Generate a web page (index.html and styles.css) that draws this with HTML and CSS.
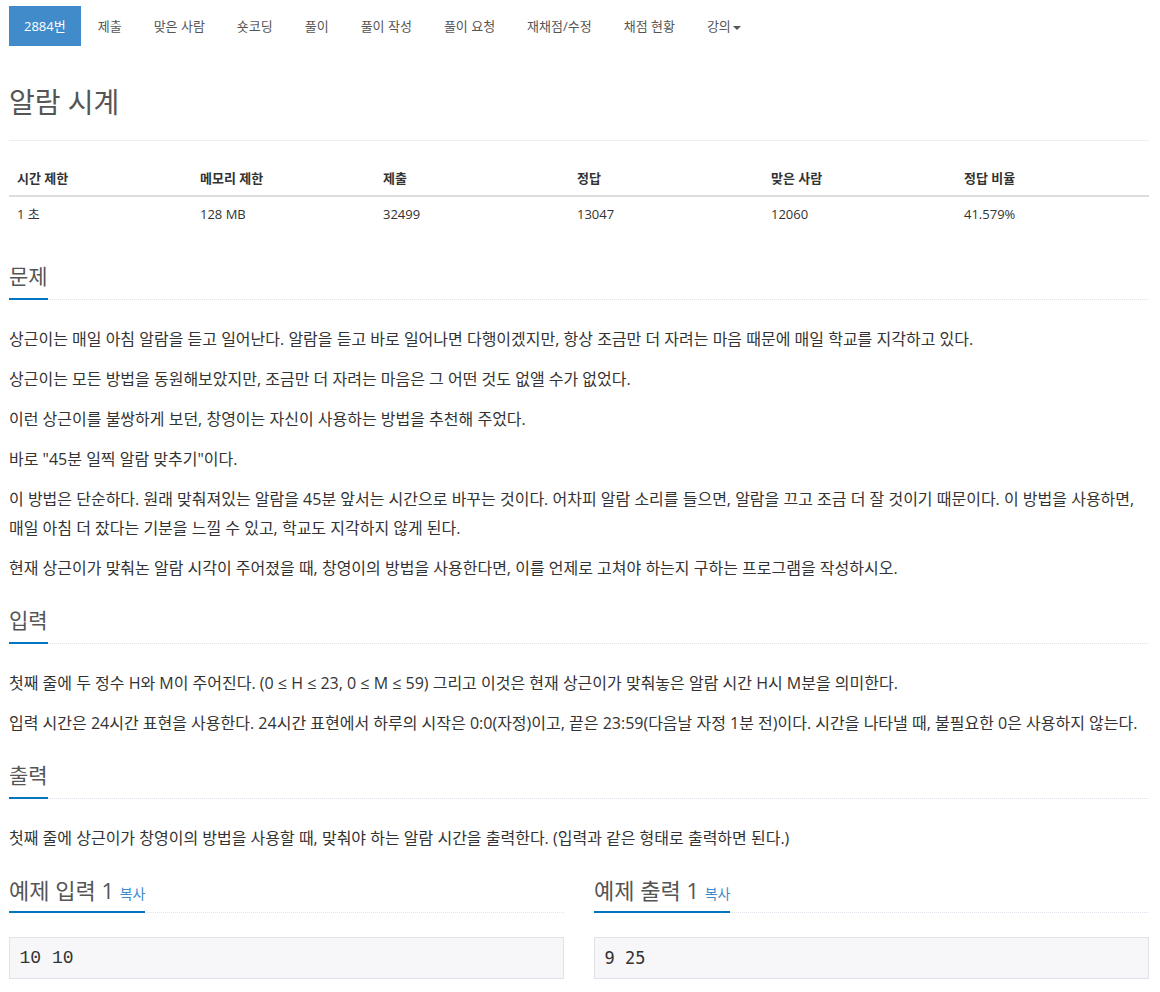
FILE: index.html
```html
<!DOCTYPE html>
<html lang="ko">
<head>
<meta charset="utf-8">
<title>알람 시계</title>
<link rel="stylesheet" href="styles.css">
</head>
<body>
<div class="wrap">
  <ul class="pills">
    <li class="active"><a>2884번</a></li>
    <li><a>제출</a></li>
    <li><a>맞은 사람</a></li>
    <li><a>숏코딩</a></li>
    <li><a>풀이</a></li>
    <li><a>풀이 작성</a></li>
    <li><a>풀이 요청</a></li>
    <li><a>재채점/수정</a></li>
    <li><a>채점 현황</a></li>
    <li><a>강의<span class="caret"></span></a></li>
  </ul>

  <div class="page-header"><h1>알람 시계</h1></div>

  <table class="info">
    <colgroup>
      <col class="c1"><col class="c2"><col class="c3"><col class="c4"><col class="c5"><col class="c6">
    </colgroup>
    <thead>
      <tr><th>시간 제한</th><th>메모리 제한</th><th>제출</th><th>정답</th><th>맞은 사람</th><th>정답 비율</th></tr>
    </thead>
    <tbody>
      <tr><td>1 초</td><td>128 MB</td><td>32499</td><td>13047</td><td>12060</td><td>41.579%</td></tr>
    </tbody>
  </table>

  <section>
    <div class="headline"><h2>문제</h2></div>
    <div class="text">
      <p>상근이는 매일 아침 알람을 듣고 일어난다. 알람을 듣고 바로 일어나면 다행이겠지만, 항상 조금만 더 자려는 마음 때문에 매일 학교를 지각하고 있다.</p>
      <p>상근이는 모든 방법을 동원해보았지만, 조금만 더 자려는 마음은 그 어떤 것도 없앨 수가 없었다.</p>
      <p>이런 상근이를 불쌍하게 보던, 창영이는 자신이 사용하는 방법을 추천해 주었다.</p>
      <p>바로 "45분 일찍 알람 맞추기"이다.</p>
      <p>이 방법은 단순하다. 원래 맞춰져있는 알람을 45분 앞서는 시간으로 바꾸는 것이다. 어차피 알람 소리를 들으면, 알람을 끄고 조금 더 잘 것이기 때문이다. 이 방법을 사용하면, 매일 아침 더 잤다는 기분을 느낄 수 있고, 학교도 지각하지 않게 된다.</p>
      <p>현재 상근이가 맞춰논 알람 시각이 주어졌을 때, 창영이의 방법을 사용한다면, 이를 언제로 고쳐야 하는지 구하는 프로그램을 작성하시오.</p>
    </div>
  </section>

  <section>
    <div class="headline"><h2>입력</h2></div>
    <div class="text">
      <p>첫째 줄에 두 정수 H와 M이 주어진다. (0 ≤ H ≤ 23, 0 ≤ M ≤ 59) 그리고 이것은 현재 상근이가 맞춰놓은 알람 시간 H시 M분을 의미한다.</p>
      <p>입력 시간은 24시간 표현을 사용한다. 24시간 표현에서 하루의 시작은 0:0(자정)이고, 끝은 23:59(다음날 자정 1분 전)이다. 시간을 나타낼 때, 불필요한 0은 사용하지 않는다.</p>
    </div>
  </section>

  <section>
    <div class="headline"><h2>출력</h2></div>
    <div class="text">
      <p>첫째 줄에 상근이가 창영이의 방법을 사용할 때, 맞춰야 하는 알람 시간을 출력한다. (입력과 같은 형태로 출력하면 된다.)</p>
    </div>
  </section>

  <div class="samples">
    <section class="sample">
      <div class="headline"><h2>예제 입력 1 <span class="copy">복사</span></h2></div>
      <pre class="data in">10 10</pre>
    </section>
    <section class="sample">
      <div class="headline"><h2>예제 출력 1 <span class="copy">복사</span></h2></div>
      <pre class="data out">9 25</pre>
    </section>
  </div>
</div>
</body>
</html>
```

FILE: styles.css
```css
html, body {
  margin: 0;
  padding: 0;
  background: #fff;
}

body {
  font-family: "Open Sans", "Noto Sans CJK KR", sans-serif;
  color: #333;
  font-size: 13px;
}

.wrap {
  width: 1140px;
  margin-left: 9px;
}

/* nav pills */
.pills {
  list-style: none;
  margin: 6px 0 0;
  padding: 0;
  display: flex;
}
.pills li + li {
  margin-left: 2px;
}
.pills a {
  display: block;
  padding: 10px 15px;
  line-height: 20px;
  font-size: 13px;
  color: #555;
}
.pills .active a {
  background: #428bca;
  color: #fff;
}
.caret {
  display: inline-block;
  width: 0;
  height: 0;
  margin-left: 2px;
  vertical-align: middle;
  border-top: 4px solid #555;
  border-left: 4px solid transparent;
  border-right: 4px solid transparent;
}

/* title */
.page-header {
  margin-top: 40px;
  padding-bottom: 21px;
  border-bottom: 1px solid #eee;
}
.page-header h1 {
  margin: 0;
  font-size: 28px;
  line-height: 33px;
  font-weight: 400;
  color: #555;
}

/* info table */
.info {
  width: 1140px;
  table-layout: fixed;
  border-collapse: collapse;
  margin: 20px 0 33px;
}
.info .c1, .info .c2 { width: 183px; }
.info .c3, .info .c4 { width: 194px; }
.info .c5, .info .c6 { width: 193px; }
.info th, .info td {
  text-align: left;
  padding: 8px;
  line-height: 18px;
  font-size: 13px;
}
.info th {
  font-weight: 700;
  border-bottom: 2px solid #ddd;
}

/* sections */
.headline {
  display: flex;
  margin: 25px 0;
  border-bottom: 1px dotted #dfe4ea;
}
.headline h2 {
  margin: 0 0 -1px;
  padding-bottom: 10px;
  font-size: 21px;
  line-height: 24px;
  height: 24px;
  font-weight: 400;
  color: #555;
  border-bottom: 2px solid #0076c0;
}
.copy {
  font-size: 14px;
  line-height: 1;
  color: #428bca;
}

.text p {
  margin: 0 0 11px;
  font-size: 16px;
  line-height: 29px;
}

/* samples */
.samples {
  display: grid;
  grid-template-columns: 1fr 1fr;
  column-gap: 30px;
}
.sample .headline {
  margin: 14px 0 24px;
}
.sample .headline h2 {
  font-size: 22px;
  padding-bottom: 9px;
}
.data {
  margin: 0;
  padding: 9px 9.5px;
  line-height: 22px;
  font-size: 18px;
  background: #f7f7f9;
  border: 1px solid #e1e1e8;
  color: #333;
}
.data.in {
  font-family: "Liberation Mono", monospace;
}
.data.out {
  font-family: "DejaVu Sans Mono", monospace;
  font-size: 17px;
}
```
